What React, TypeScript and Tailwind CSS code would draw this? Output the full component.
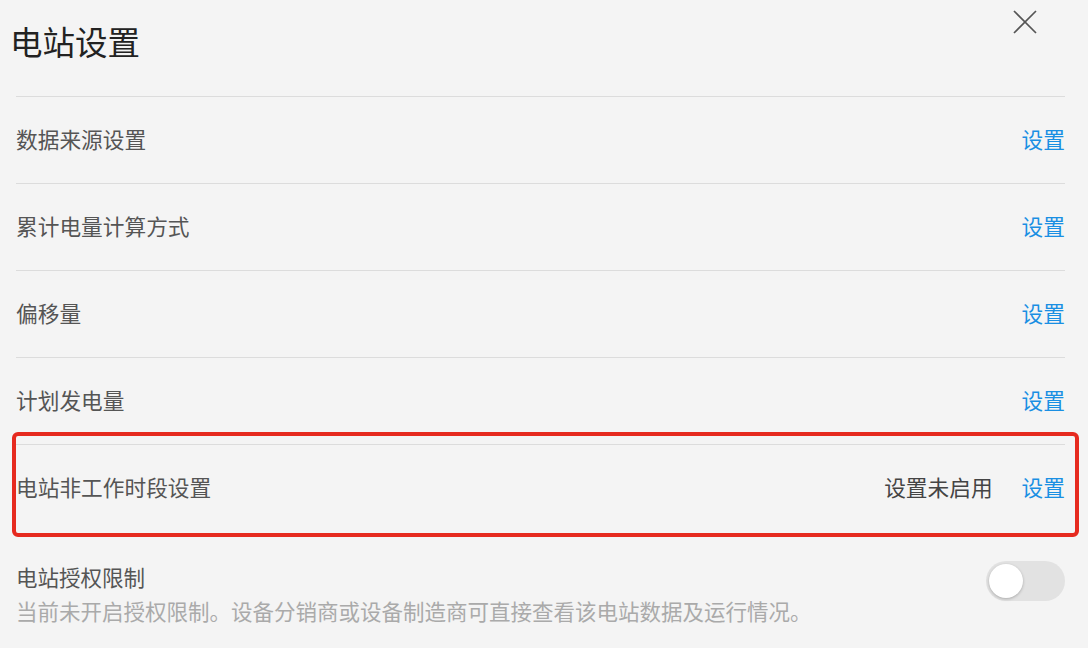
import React, { useState } from "react";

const rows = [
  { label: "数据来源设置" },
  { label: "累计电量计算方式" },
  { label: "偏移量" },
  { label: "计划发电量" },
  { label: "电站非工作时段设置", status: "设置未启用" },
];

const App = () => {
  const [authOn, setAuthOn] = useState(false);

  return (
    <div
      className="relative w-[1088px] h-[648px] overflow-hidden bg-[#f4f4f4] text-[#555]"
      style={{ fontFamily: '"Noto Sans CJK SC", "Noto Sans", sans-serif' }}
    >
      {/* Header */}
      <div className="h-[96px] flex items-start justify-between">
        <h1 className="pl-[10px] pt-[21px] text-[32.5px] leading-[40px] text-[#222] font-normal">
          电站设置
        </h1>
        <button className="mt-[10px] mr-[51px] size-[24px] text-[#555]">
          <svg viewBox="0 0 24 24" width="24" height="24" fill="none" stroke="currentColor" strokeWidth="1.7">
            <path d="M1 1 L23 23 M23 1 L1 23" />
          </svg>
        </button>
      </div>

      {/* Rows */}
      <div className="ml-[16px] w-[1049px]">
        {rows.map((row) => (
          <div
            key={row.label}
            className="h-[87px] pb-[3px] border-t border-[#dcdcdc] flex items-center justify-between text-[21.7px] leading-[30px]"
          >
            <span>{row.label}</span>
            <div className="flex items-center gap-[29px]">
              {row.status && <span className="text-[#444]">{row.status}</span>}
              <button className="text-[#1a8fe3] leading-[30px]">设置</button>
            </div>
          </div>
        ))}

        {/* Auth limit */}
        <div className="flex items-start justify-between pt-[29px]">
          <div className="text-[21.5px] leading-[34px]">
            <p className="text-[#555]">电站授权限制</p>
            <p className="text-[#aaa]">
              当前未开启授权限制。设备分销商或设备制造商可直接查看该电站数据及运行情况。
            </p>
          </div>
          <button
            onClick={() => setAuthOn(!authOn)}
            className={`mt-[1px] w-[79px] h-[40px] rounded-full p-[3px] flex items-center ${
              authOn ? "bg-[#1a8fe3] justify-end" : "bg-[#e2e2e2] justify-start"
            }`}
          >
            <span className="block size-[34px] rounded-full bg-white shadow-[0_1px_3px_rgba(0,0,0,0.25)]" />
          </button>
        </div>
      </div>

      {/* Highlight annotation */}
      <div className="absolute left-[12px] top-[432px] w-[1067px] h-[105px] border-4 border-[#e62a1f] rounded-[6px] pointer-events-none" />
    </div>
  );
};

export default App;
